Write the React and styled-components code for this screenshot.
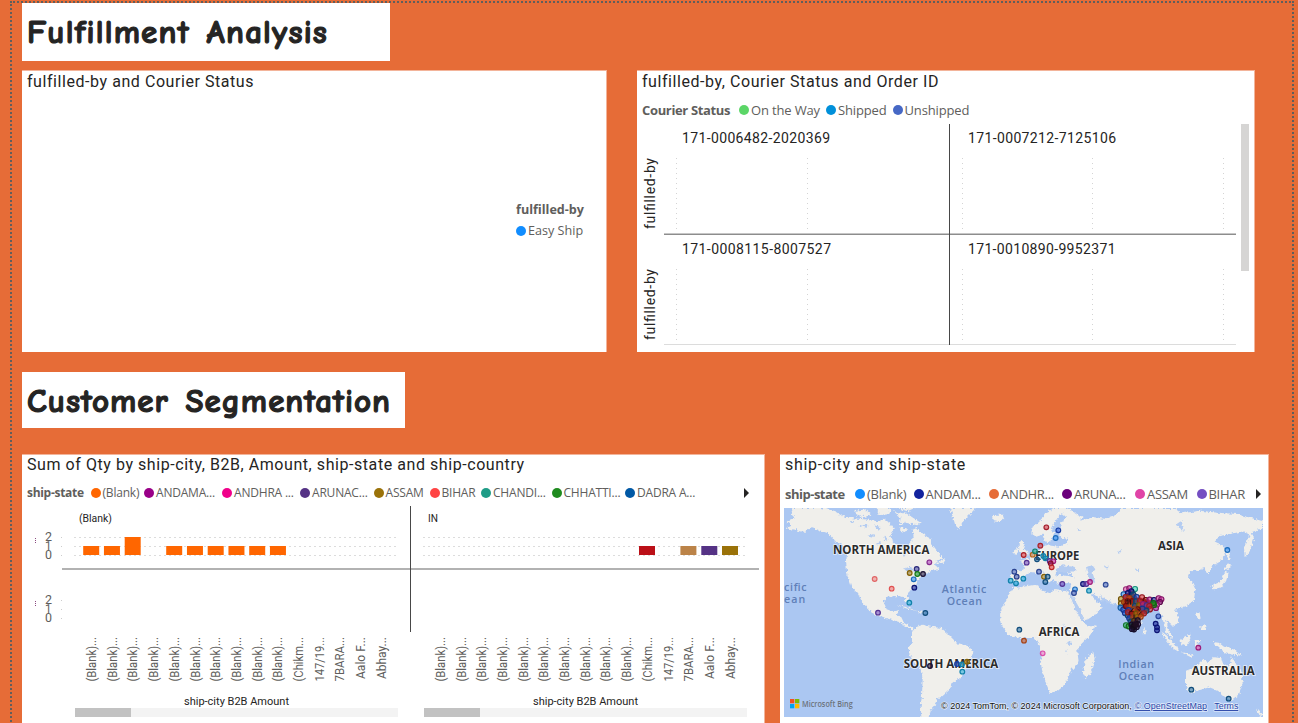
import React from 'react';
import styled, { createGlobalStyle } from 'styled-components';

const DIN = `Roboto, "Liberation Sans", sans-serif`;
const SEGOE = `"Segoe UI", "Open Sans", "Noto Sans", sans-serif`;

const GlobalStyle = createGlobalStyle`
  * { box-sizing: border-box; }
  body { margin: 0; background: #e66c37; overflow: hidden; }
`;

const Page = styled.main`
  height: 723px;
  padding: 1px 4px 0 10px;
  background: #e66c37;
  overflow: hidden;
`;

const Canvas = styled.div`
  display: flex;
  flex-direction: column;
  align-items: flex-start;
  width: 1284px;
  height: 760px;
  padding-left: 10px;
  border: 2px dotted #605e5c;
`;

const Heading = styled.h1`
  display: flex;
  align-items: center;
  flex: none;
  width: ${(p) => p.$width}px;
  height: ${(p) => p.$height}px;
  margin: ${(p) => p.$top || 0}px 0 0;
  padding: 2px 0 0 5px;
  background: #fff;
  color: #252423;
  font: 800 33px/1 "Comic Sans MS", "Comic Neue", Lato, sans-serif;
  letter-spacing: ${(p) => p.$spacing}px;
  word-spacing: 4px;
  -webkit-text-stroke: 1.15px #252423;
  white-space: nowrap;
`;

const Row = styled.section`
  display: flex;
  flex: none;
  gap: ${(p) => p.$gap}px;
  margin-top: ${(p) => p.$top}px;
`;

const Card = styled.article`
  display: flex;
  flex-direction: column;
  width: ${(p) => p.$width}px;
  height: ${(p) => p.$height}px;
  background: #fff;
  border: solid #f3b49a;
  border-width: 1px 1px 0 0;
`;

const CardTitle = styled.h2`
  flex: none;
  height: 23px;
  margin: 0;
  padding-left: 5px;
  color: #252423;
  font: 400 16px/${(p) => p.$line || 22}px ${DIN};
  letter-spacing: ${(p) => p.$spacing || 0.56}px;
  white-space: nowrap;
`;

const Legend = styled.div`
  display: flex;
  align-items: center;
  flex: none;
  height: ${(p) => p.$height}px;
  padding: ${(p) => p.$drop || 0}px 0 0 5px;
  color: #605e5c;
  font: 400 ${(p) => p.$size || 13}px/18px ${SEGOE};
  letter-spacing: ${(p) => p.$spacing || 0}px;
  white-space: nowrap;
`;

const LegendTitle = styled.strong`
  flex: none;
  width: ${(p) => p.$width}px;
  font-weight: 700;
  letter-spacing: ${(p) => p.$spacing || 0}px;
`;

const LegendItem = styled.span`
  display: flex;
  align-items: center;
  flex: none;
  width: ${(p) => p.$width}px;
  gap: 2px;
  &::before {
    content: '';
    flex: none;
    width: 10px;
    height: 10px;
    border-radius: 50%;
    background: ${(p) => p.$color};
  }
`;

const NextArrow = styled.span`
  width: 0;
  height: 0;
  border: solid transparent;
  border-width: 5px 0 5px 5px;
  border-left-color: #252423;
`;

const SideLegend = styled.div`
  display: flex;
  flex-direction: column;
  align-self: flex-end;
  width: 90px;
  margin-top: 105px;
  color: #605e5c;
  font: 400 12.6px/21px ${SEGOE};
  letter-spacing: 0;
  white-space: nowrap;
`;

const ChartArea = styled.div`
  display: flex;
  align-items: flex-start;
`;

const ScrollThumb = styled.div`
  width: 8px;
  height: 147px;
  background: #d6d5d4;
`;

const Drawing = styled.svg`
  display: block;
  flex: none;
`;

const MapFrame = styled.div`
  padding-left: 4px;
`;

const Label = ({ x, y, w, size, children, ...rest }) => (
  <text x={x} y={y} fontSize={size} textLength={w} lengthAdjust="spacingAndGlyphs" {...rest}>
    {children}
  </text>
);

const SpacedLabel = ({ x, y, w, size, children, ...rest }) => (
  <text x={x} y={y} fontSize={size} textLength={w} lengthAdjust="spacing" {...rest}>
    {children}
  </text>
);

const orderPanels = [
  { x: 682, y: 143, id: '171-0006482-2020369', w: 148 },
  { x: 968, y: 143, id: '171-0007212-7125106', w: 148 },
  { x: 682, y: 254, id: '171-0008115-8007527', w: 149 },
  { x: 968, y: 254, id: '171-0010890-9952371', w: 147.5 },
];

function OrderChart() {
  return (
    <Drawing width="604" height="226" viewBox="637 124 604 226" fontFamily={DIN} fill="#252423">
      {orderPanels.map((p) => (
        <SpacedLabel key={p.id} x={p.x} y={p.y} w={p.w} size="14">{p.id}</SpacedLabel>
      ))}
      {[0, 111].map((dy) => (
        <g key={dy}>
          <SpacedLabel x="0" y="0" w="71" size="14" transform={`translate(655 ${229 + dy}) rotate(-90)`}>fulfilled-by</SpacedLabel>
          {[676.5, 807.5, 962.5, 1092.5, 1223.5].map((x) => (
            <line key={x} x1={x} x2={x} y1={158 + dy} y2={229 + dy} stroke="#d4d4d4" strokeDasharray="1 4" />
          ))}
        </g>
      ))}
      <path d="M664 234.2H1236" stroke="#8d8d8d" strokeWidth="1.6" />
      <path d="M664 344.5H1236" stroke="#dcdcdc" />
      <path d="M949.5 124V345" stroke="#484848" />
    </Drawing>
  );
}

const cityLabels = [...Array(10).fill('(Blank)...'), '(Chikm...', '147/19...', '7BARA...', 'Aalo F...', 'Abhay...'];
const PITCH = 20.75;
const qtyBars = [
  ...[0, 1, 2, 4, 5, 6, 7, 8, 9].map((i) => ({ x: 83.2 + i * PITCH, v: i === 2 ? 2 : 1, c: '#ff6600' })),
  { x: 639, v: 1, c: '#bb1018' },
  { x: 680.4, v: 1, c: '#bb8348' },
  { x: 701.3, v: 1, c: '#553285' },
  { x: 722, v: 1, c: '#9a7209' },
];

function QtyChart() {
  return (
    <Drawing width="742" height="217" viewBox="22 506 742 217" fontFamily={DIN} fill="#252423">
      <Label x="79" y="522" w="33" size="10.5">(Blank)</Label>
      <Label x="428" y="522" w="10" size="10.5">IN</Label>
      {[0, 63].map((dy) => (
        <g key={dy} fill="#605e5c">
          <Label x="45" y={541 + dy} w="7" size="12">2</Label>
          <Label x="45" y={550 + dy} w="6.5" size="12">1</Label>
          <Label x="45" y={559 + dy} w="7" size="12">0</Label>
          <path d={`M35.5 ${538 + dy}v6`} stroke="#8a4a80" strokeDasharray="1 1" />
          <path d={`M61 ${537.5 + dy}h1M61 ${546.5 + dy}h1M61 ${555.5 + dy}h1`} stroke="#ccc" />
        </g>
      ))}
      {[537.5, 546.5, 555.5].map((y) => (
        <path key={y} d={`M74 ${y}H397M423 ${y}H746`} stroke="#dcdcdc" strokeDasharray="2 3" />
      ))}
      {qtyBars.map((b) => (
        <rect key={b.x} x={b.x} y={555 - b.v * 9} width="16" height={b.v * 9} fill={b.c} />
      ))}
      <path d="M62 569H759" stroke="#999" strokeWidth="1.6" />
      <path d="M410.5 506V632" stroke="#484848" />
      {[96, 444.8].map((left) =>
        cityLabels.map((t, i) => (
          <Label
            key={left + '-' + i}
            x="0"
            y="0"
            w={i > 12 ? 42 : 44.5}
            size="12"
            fill="#605e5c"
            textAnchor="end"
            transform={`translate(${left + i * 20.7} 637) rotate(-90)`}
          >
            {t}
          </Label>
        ))
      )}
      {[75, 424].map((x) => (
        <g key={x}>
          <Label x={x + 109} y="705" w="105" size="10.5">ship-city B2B Amount</Label>
          <rect x={x} y="708" width="323" height="9" fill="#f3f3f3" />
          <rect x={x} y="708" width="56" height="9" fill="#c2c2c2" />
        </g>
      ))}
    </Drawing>
  );
}

const land = [
  'M28 0L20 18L34 30L8 40L22 52L6 60L34 66L60 72L82 58L104 66L132 76L150 96L176 112L190 132L186 160L190 200L202 236L222 258L240 292L260 312L278 322L305 330L345 342L370 358L385 368L388 360L360 345L352 328L338 322L345 305L330 312L308 304L298 280L312 266L342 264L362 268L370 290L376 286L370 262L384 244L398 232L400 216L420 200L440 190L466 182L452 170L478 152L462 132L442 106L440 92L415 78L398 60L384 66L386 90L376 108L372 130L352 118L330 104L318 84L330 62L316 44L300 32L280 40L240 34L200 30L175 24L150 8L110 0Z',
  'M215 8L245 4L262 20L240 28L214 22ZM275 0L320 0L316 18L285 22ZM330 10L370 18L410 44L400 52L366 44L346 54L350 30ZM350 58L372 62L366 72L348 68ZM340 0L392 0L370 10Z',
  'M455 160L474 150L484 156L478 166ZM336 290L370 298L396 308L370 302ZM396 308L425 312L412 318Z',
  'M498 0L506 24L514 52L526 64L540 36L564 12L575 0Z',
  'M624 30L632 20L656 20L660 32L642 42L630 40Z',
  'M384 372L396 356L414 350L440 356L472 360L490 376L506 392L520 406L552 414L568 430L564 448L548 468L542 494L524 514L504 524L496 546L476 564L458 574L452 594L440 606L434 627L412 627L410 596L414 562L416 514L410 484L392 466L376 436L374 418L384 402Z',
  'M704 108L712 96L722 104L718 120L734 134L732 148L708 150L716 138L706 128ZM694 122L704 120L700 138L688 136Z',
  'M682 188L716 186L722 172L706 158L734 152L750 138L768 132L772 116L790 112L826 116L850 104L852 92L832 90L824 70L828 52L846 26L832 16L812 42L804 62L812 76L800 100L786 104L776 80L756 86L742 76L746 56L764 44L784 14L812 0L848 0L880 20L902 28L884 38L930 28L962 32L990 22L1016 0L1170 0L1192 16L1250 8L1300 14L1360 18L1437 40L1437 60L1404 72L1410 92L1396 132L1382 148L1380 118L1398 80L1376 70L1340 78L1306 84L1292 102L1318 114L1326 138L1306 162L1282 176L1274 200L1266 196L1262 180L1240 188L1218 190L1212 204L1224 222L1234 244L1230 276L1208 294L1180 302L1170 300L1184 324L1182 344L1164 356L1154 340L1146 332L1154 366L1168 392L1158 388L1144 366L1136 332L1126 302L1110 296L1090 308L1076 332L1062 366L1050 370L1034 336L1024 304L1008 292L974 282L950 276L936 264L920 252L932 276L956 298L940 316L912 334L894 338L880 304L864 272L858 246L862 226L832 226L812 222L806 204L826 200L874 208L852 194L862 180L840 188L820 186L812 206L800 224L790 222L780 192L774 188L794 214L784 222L762 196L740 192L720 208L706 224L690 222L680 218Z',
  'M688 240L710 238L752 230L766 234L770 246L798 256L812 246L850 250L862 272L876 306L898 344L910 352L936 352L918 382L892 408L880 430L884 462L860 488L852 512L836 536L820 550L798 554L786 526L770 468L774 440L768 414L752 390L704 390L674 382L650 348L648 318L660 288L674 260Z',
  'M928 432L932 452L918 500L904 510L896 494L904 470L900 458Z',
  'M1206 488L1236 476L1258 456L1276 462L1288 448L1312 450L1316 464L1334 476L1344 444L1354 464L1374 500L1376 528L1364 562L1344 578L1324 568L1302 548L1276 538L1248 546L1218 554L1206 536Z',
  'M1132 370L1150 384L1180 418L1186 432L1168 422L1146 396ZM1186 398L1206 386L1218 376L1222 392L1208 412L1192 408ZM1190 432L1230 442L1218 446ZM1232 396L1252 396L1240 408L1246 422L1234 420ZM1284 402L1304 404L1320 416L1348 424L1374 444L1350 440L1324 436L1304 416ZM1236 314L1246 312L1250 332L1240 330ZM1248 356L1264 352L1264 366L1254 366ZM1078 360L1088 370L1080 382Z',
  'M1282 234L1306 224L1318 204L1324 188L1334 194L1326 220L1312 238L1288 244ZM1322 182L1334 166L1342 176L1328 186ZM1332 154L1324 114L1334 132L1340 152Z',
  'M1340 588L1352 588L1346 600ZM1416 602L1430 610L1437 622L1428 624Z',
];
const lakes = [
  'M818 182L836 172L868 176L878 188L846 194L824 194Z',
  'M906 178L924 170L934 184L926 194L934 224L918 222L912 202Z',
  'M360 182L376 176L392 186L380 190L374 206L368 190ZM392 198L410 196L404 204ZM250 82L272 78L270 86ZM276 106L290 102L288 114ZM226 52L250 50L248 60Z',
  'M196 40L212 38L208 48ZM270 52L292 58L284 68ZM300 84L314 94L304 100ZM258 120L270 124L262 130ZM356 130L366 140L358 146Z',
  'M850 402L862 400L862 412L852 414ZM846 424L850 440L846 438ZM838 342L850 370L844 366Z',
  'M1120 124L1138 110L1152 98L1140 122ZM1000 130L1014 126L1006 138ZM1178 48L1190 40L1200 72L1188 64ZM1052 186L1066 180L1062 190ZM960 176L974 172L970 182ZM880 60L892 66L884 72Z',
  'M860 254L870 272L890 306L902 338L892 338L872 302Z',
  'M948 262L962 272L982 280L974 286L954 278Z',
];

const B = '#1f4fd0', N = '#101a94', C = '#18a6d8', R = '#d92b33', P = '#6b42bd', M = '#c8269b', T = '#19649e', K = '#221640', G = '#1c9b20', O = '#d2551c', Y = '#a97e0c', L = '#268bf0';
const pins = [
  [272, 213, '#ed6b6b', 1], [323, 242, '#ed5555', 1], [282, 314, P], [377, 195, Y], [398, 183, '#38389c'], [400, 198, G], [417, 198, K], [436, 163, '#ac3ab8'], [389, 214, L], [391, 239, N], [376, 284, C], [424, 315, T],
  [438, 474, K], [519, 468, B], [534, 469, C], [549, 461, Y], [535, 491, C],
  [787, 58, '#d12b3b'], [823, 67, B], [815, 90, L], [769, 113, R], [719, 141, R], [728, 164, P], [746, 140, '#e6852b'], [753, 130, '#16a890'], [759, 154, T], [778, 144, C], [784, 151, C], [797, 159, P], [808, 160, M], [800, 166, '#a61035'], [803, 178, '#ed3333'], [691, 191, '#3858bb'], [698, 206, '#354fb0'], [680, 218, C], [696, 226, C], [718, 212, C], [765, 191, '#3858bb'], [780, 206, Y], [791, 206, T], [784, 222, T], [835, 228, P], [873, 244, L], [870, 255, '#3858bb'], [897, 228, N], [907, 228, P], [918, 222, M], [915, 248, C], [965, 230, '#3e60c0'],
  [706, 365, T], [720, 398, O], [776, 436, '#e552b5', 1], [1330, 126, L], [1243, 419, M], [1222, 545, T], [1334, 572, T], [1123, 325, '#3656c4'], [1115, 347, N], [1119, 358, N], [1119, 367, N],
];
const indiaPins = [
  [1026, 244, '#e552b5'], [1036, 241, M], [1053, 243, '#2ed8bd'], [1019, 259, L], [1032, 255, N], [1042, 250, N], [1048, 260, T], [1011, 273, Y], [1011, 286, Y], [1025, 267, R], [1036, 270, O], [1058, 267, B], [1020, 282, O], [1031, 280, '#9c1212'], [1044, 280, '#9c1212'], [1056, 280, T], [1068, 278, R], [1074, 268, R], [1085, 276, '#9c1212'], [1097, 275, M], [1110, 276, N], [1124, 271, M], [1132, 274, M], [1128, 282, '#891172'], [1119, 290, M], [1116, 300, M], [1110, 291, G], [1108, 285, G], [1010, 299, L], [1018, 305, B], [1026, 294, '#9c1212'], [1039, 293, O], [1053, 294, T], [1065, 292, Y], [1077, 288, M], [1088, 292, P], [1096, 294, R], [1098, 304, R], [1087, 308, T], [1075, 302, B], [1061, 304, '#9c1212'], [1048, 304, O], [1034, 306, B], [1023, 315, B], [1031, 322, T], [1032, 313, R], [1043, 317, '#9c1212'], [1057, 317, Y], [1068, 316, O], [1080, 316, R], [1036, 331, B], [1048, 328, O], [1060, 327, Y], [1070, 326, O], [1040, 341, T], [1051, 338, '#714311'], [1061, 337, K], [1026, 352, '#25b34d'], [1034, 355, G], [1043, 350, K], [1055, 348, K], [1062, 349, K], [1046, 358, K], [1058, 357, K], [1050, 364, K], [1044, 363, K], [1056, 349, '#55215a'],
];

function Pin({ x, y, color, light, r = 7, shade = 0.22 }) {
  return (
    <g>
      <circle cx={x} cy={y} r={r} fill={color} fillOpacity={light ? 0.45 : 0.55} stroke={color} strokeWidth="3.4" />
      <circle cx={x} cy={y} r={r} fill="none" stroke="#000" strokeOpacity={light ? 0.05 : shade} strokeWidth="3.4" />
    </g>
  );
}

const continents = [
  [147, 137, 289, 'NORTH AMERICA'], [359, 479, 284, 'SOUTH AMERICA'], [753, 155, 133, 'EUROPE'],
  [1122, 125, 78, 'ASIA'], [764, 383, 122, 'AFRICA'], [1223, 502, 189, 'AUSTRALIA'],
];
const oceans = [
  [0, 248, 68, 'cific'], [0, 284, 64, 'ean'], [473, 254, 134, 'Atlantic'], [488, 290, 106, 'Ocean'],
  [1003, 481, 107, 'Indian'], [1004, 517, 106, 'Ocean'],
];

function WorldMap() {
  return (
    <Drawing width="479" height="209" viewBox="0 0 1437 627" fontFamily={SEGOE}>
      <defs>
        <filter id="coast" x="0" y="0" width="100%" height="100%">
          <feTurbulence type="fractalNoise" baseFrequency="0.12" numOctaves="2" seed="4" />
          <feDisplacementMap in="SourceGraphic" scale="14" xChannelSelector="R" yChannelSelector="G" />
        </filter>
      </defs>
      <rect width="1437" height="627" fill="#abc7f2" />
      <g filter="url(#coast)">
        <path d={land.join('')} fill="#f0efeb" />
        <path d={lakes.join('')} fill="#b4ccf1" />
      </g>
      <g fill="#5f7fb8">
        {oceans.map(([x, y, w, t]) => <SpacedLabel key={x + t} x={x} y={y} w={w} size="32" fontWeight="600">{t}</SpacedLabel>)}
      </g>
      <g fill="#2b2b2b" stroke="#fff" strokeOpacity="0.7" strokeWidth="5" paintOrder="stroke" fontWeight="700">
        {continents.map(([x, y, w, t]) => <Label key={t} x={x} y={y} w={w} size="36">{t}</Label>)}
      </g>
      {pins.map(([x, y, c, light], i) => <Pin key={i} x={x} y={y} color={c} light={light} />)}
      <path d="M1018 262L1045 248L1062 270L1100 276L1124 280L1110 296L1098 304L1060 340L1048 364L1036 340L1026 312L1014 290Z" fill="#a0281a" />
      {indiaPins.map(([x, y, c], i) => <Pin key={i} x={x} y={y} color={c} r={7.6} shade={0.34} />)}
      <path d="M1026 280l6-5v14M1040 276v14M1060 302l8 8M1048 300l-8 12M1064 320l8-8M1050 320v12" stroke="#161018" strokeWidth="3" fill="none" />
      <path d="M1042 346L1064 336L1064 354L1050 368L1040 360Z" fill="#120a14" opacity="0.7" />
      <rect x="18" y="573" width="13" height="13" fill="#f25022" />
      <rect x="33" y="573" width="13" height="13" fill="#7fba00" />
      <rect x="18" y="588" width="13" height="13" fill="#00a4ef" />
      <rect x="33" y="588" width="13" height="13" fill="#ffb900" />
      <Label x="54" y="596" w="152" size="26" fill="#6c737c" fontWeight="600">Microsoft Bing</Label>
      <g fontFamily='"Liberation Sans", Arial, sans-serif' stroke="#fff" strokeOpacity="0.7" strokeWidth="4" paintOrder="stroke">
        <Label x="471" y="603" w="572" size="28" fill="#111">© 2024 TomTom, © 2024 Microsoft Corporation,</Label>
        <g fill="#2744a8">
          <Label x="1052" y="603" w="217" size="28" textDecoration="underline">© OpenStreetMap</Label>
          <Label x="1291" y="603" w="72" size="28" textDecoration="underline">Terms</Label>
        </g>
      </g>
    </Drawing>
  );
}

const courierLegend = [['On the Way', '#5bd667', 87], ['Shipped', '#0090da', 66.5], ['Unshipped', '#4668c5', 75]];
const stateLegend = [
  ['(Blank)', '#ff6600', 53.5], ['ANDAMA...', '#990088', 78], ['ANDHRA ...', '#f0008a', 78], ['ARUNAC...', '#553285', 73.5],
  ['ASSAM', '#9a7209', 56], ['BIHAR', '#ff4444', 51.5], ['CHANDI...', '#1f9c87', 70.5], ['CHHATTI...', '#1f8b1f', 73.5], ['DADRA A...', '#0058a5', 118.5],
];
const mapLegend = [
  ['(Blank)', '#118dff', 58.5], ['ANDAM...', '#12239e', 75.5], ['ANDHR...', '#e66c37', 73], ['ARUNA...', '#6b007b', 73],
  ['ASSAM', '#e044a7', 61.5], ['BIHAR', '#744ec2', 59.5],
];

const LegendItems = ({ items }) =>
  items.map(([name, color, width]) => <LegendItem key={name} $color={color} $width={width}>{name}</LegendItem>);

export default function App() {
  return (
    <Page>
      <GlobalStyle />
      <Canvas>
        <Heading $width={368} $height={57.5} $spacing={1.2}>Fulfillment Analysis</Heading>
        <Row $gap={30} $top={9.5}>
          <Card $width={585} $height={282}>
            <CardTitle>fulfilled-by and Courier Status</CardTitle>
            <SideLegend>
              <LegendTitle $width={80}>fulfilled-by</LegendTitle>
              <LegendItem $color="#118dff" $width={80}>Easy Ship</LegendItem>
            </SideLegend>
          </Card>
          <Card $width={618} $height={282}>
            <CardTitle>fulfilled-by, Courier Status and Order ID</CardTitle>
            <Legend $height={30} $drop={2} $size={13} $spacing={-0.15}>
              <LegendTitle $width={97} $spacing={-0.35}>Courier Status</LegendTitle>
              <LegendItems items={courierLegend} />
            </Legend>
            <ChartArea>
              <OrderChart />
              <ScrollThumb />
            </ChartArea>
          </Card>
        </Row>
        <Heading $width={383} $height={56} $top={20} $spacing={1}>Customer Segmentation</Heading>
        <Row $gap={15} $top={26}>
          <Card $width={743} $height={300}>
            <CardTitle $line={20}>Sum of Qty by ship-city, B2B, Amount, ship-state and ship-country</CardTitle>
            <Legend $height={28} $drop={2} $size={12} $spacing={-0.2}>
              <LegendTitle $width={63.5} $spacing={-0.3}>ship-state</LegendTitle>
              <LegendItems items={stateLegend} />
              <NextArrow />
            </Legend>
            <QtyChart />
          </Card>
          <Card $width={489} $height={300}>
            <CardTitle $line={20} $spacing={0.7}>ship-city and ship-state</CardTitle>
            <Legend $height={30} $drop={1} $size={13} $spacing={-0.3}>
              <LegendTitle $width={70} $spacing={-0.5}>ship-state</LegendTitle>
              <LegendItems items={mapLegend} />
              <NextArrow />
            </Legend>
            <MapFrame>
              <WorldMap />
            </MapFrame>
          </Card>
        </Row>
      </Canvas>
    </Page>
  );
}
